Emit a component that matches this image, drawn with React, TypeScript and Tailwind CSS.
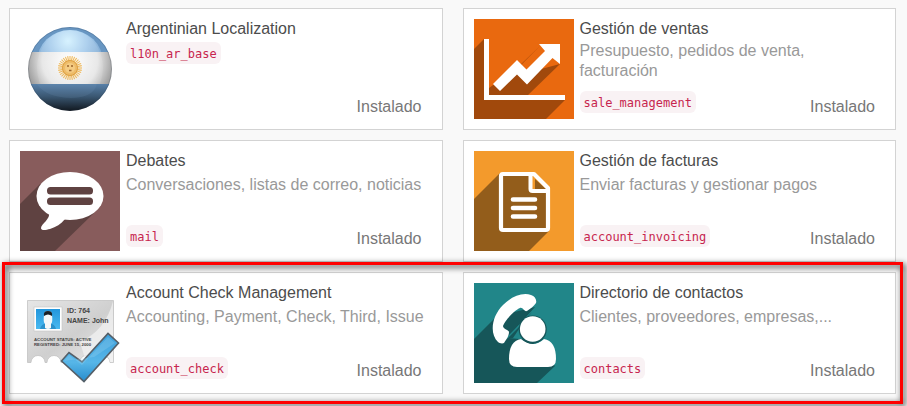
import type { ReactNode } from "react";

interface Module {
  title: string;
  summary?: string;
  twoLines?: boolean;
  code: string;
  icon: ReactNode;
}

const ICON = "h-[100px] w-[100px] shrink-0";

function ArgentinaIcon() {
  const rays = Array.from({ length: 32 }, (_, i) => i * 11.25);
  return (
    <svg viewBox="0 0 100 100" className={ICON} aria-hidden="true">
      <defs>
        <clipPath id="ball">
          <circle cx="50" cy="50" r="42" />
        </clipPath>
        <radialGradient id="sky" gradientUnits="userSpaceOnUse" cx="48" cy="22" r="38">
          <stop offset="0" stopColor="#d3f1ff" />
          <stop offset="0.5" stopColor="#a5cbec" />
          <stop offset="1" stopColor="#7ba6cf" />
        </radialGradient>
        <radialGradient id="band" gradientUnits="userSpaceOnUse" cx="50" cy="42" r="46">
          <stop offset="0" stopColor="#ffffff" />
          <stop offset="0.6" stopColor="#e6e6e6" />
          <stop offset="1" stopColor="#959595" />
        </radialGradient>
        <linearGradient id="deep" x1="0" y1="0" x2="0" y2="1">
          <stop offset="0" stopColor="#5880a8" />
          <stop offset="0.35" stopColor="#3b5873" />
          <stop offset="0.78" stopColor="#10161d" />
        </linearGradient>
      </defs>
      <g clipPath="url(#ball)">
        <rect width="100" height="34" fill="#6896c2" />
        <ellipse cx="50" cy="43" rx="33" ry="32" fill="url(#sky)" />
        <rect y="33" width="100" height="32" fill="url(#band)" />
        <ellipse cx="50" cy="49" rx="33" ry="38" fill="#ffffff" opacity="0.1" />
        <rect y="65" width="100" height="35" fill="url(#deep)" />
        <path d="M17 65h60c-2 9-12 14-26 14S22 74 17 65z" fill="#7da2c6" opacity="0.14" />
      </g>
      <circle cx="50" cy="50" r="41.5" fill="none" stroke="#243447" strokeOpacity="0.2" />
      <g stroke="#efb95b" strokeWidth="1.1">
        {rays.map((a) => (
          <line key={a} x1="50" y1="37" x2="50" y2="42" transform={`rotate(${a} 50 49)`} />
        ))}
      </g>
      <circle cx="50" cy="49" r="7.5" fill="#eebc69" stroke="#dda044" />
      <circle cx="50" cy="49" r="5" fill="#f5cc83" />
      <path d="M47 47h2M51 47h2M49 51.500h2.500" stroke="#9c642c" strokeWidth="1.300" />
    </svg>
  );
}

function SalesIcon() {
  return (
    <svg viewBox="0 0 100 100" className={ICON} aria-hidden="true">
      <rect width="100" height="100" fill="#e9690f" />
      <path d="M10 20L0 30v70h72l19-19H15V20z" fill="#a1490c" />
      <path d="M15 20h71v56H15z" fill="#e9690f" />
      <path d="M66 27L47 46l5 8L86 45 54 76H15v-7l28-20z" fill="#a1490c" />
      <path d="M10 20h5v56h76v5H10z" fill="#fff" />
      <path d="M19 65l24-24 9.500 9.500L71 32l-6-7h21v20l-7.500-6L53 65.500l-10-10L26 72z" fill="#fff" />
    </svg>
  );
}

function ChatIcon() {
  return (
    <svg viewBox="0 0 100 100" className={ICON} aria-hidden="true">
      <rect width="100" height="100" fill="#885c5c" />
      <path d="M20 33L0 53v47h35l39-38z" fill="#5f4241" />
      <ellipse cx="50" cy="45" rx="33.500" ry="24" fill="#fff" />
      <path d="M29 61c2 7-8 12-8 16 0 3 5 2 9 1 6-2 11-5 15-10z" fill="#fff" />
      <rect x="27" y="36" width="46" height="7.500" rx="3.500" fill="#5f4241" />
      <rect x="27" y="46.500" width="46" height="7.500" rx="3.500" fill="#5f4241" />
    </svg>
  );
}

function InvoiceIcon() {
  return (
    <svg viewBox="0 0 100 100" className={ICON} aria-hidden="true">
      <rect width="100" height="100" fill="#f39a2c" />
      <path d="M26 22L0 48v52h55l20-20V39H57V24z" fill="#935d1b" />
      <path d="M61 28l11 10H61z" fill="#935d1b" />
      <path
        d="M29 23h31l14 14v40q0 2-2 2H29q-2 0-2-2V25q0-2 2-2z"
        fill="none"
        stroke="#fff"
        strokeWidth="4.200"
        strokeLinejoin="round"
      />
      <path d="M56.500 24v14q0 2 2 2H74" fill="none" stroke="#fff" strokeWidth="4" />
      <path
        d="M39 48.500h22M39 57h22M39 65.500h22"
        stroke="#fff"
        strokeWidth="4.600"
        strokeLinecap="round"
      />
    </svg>
  );
}

function CheckIcon() {
  return (
    <svg viewBox="0 0 100 100" className={ICON} aria-hidden="true">
      <defs>
        <linearGradient id="paper" x1="0" y1="0" x2="1" y2="1">
          <stop offset="0" stopColor="#e6e6e6" />
          <stop offset="0.55" stopColor="#cfcfcf" />
          <stop offset="1" stopColor="#ededed" />
        </linearGradient>
        <linearGradient id="photo" x1="0" y1="0" x2="0" y2="1">
          <stop offset="0" stopColor="#2396dc" />
          <stop offset="1" stopColor="#49b9f0" />
        </linearGradient>
        <linearGradient id="tick" x1="0" y1="0" x2="0" y2="1">
          <stop offset="0" stopColor="#3d9fda" />
          <stop offset="0.6" stopColor="#57b6e8" />
          <stop offset="1" stopColor="#278ccc" />
        </linearGradient>
      </defs>
      <path
        d="M7.500 17.500h86v62H90a7 7 0 0 0-14 0h-2.500a7 7 0 0 0-14 0H57a7 7 0 0 0-14 0h-2a7 7 0 0 0-14 0h-2a7 7 0 0 0-14 0H7.500z"
        fill="url(#paper)"
        stroke="#bdbdbd"
        strokeWidth="0.700"
      />
      <path d="M93 18v61h-3a7 7 0 0 0-14 0H66l-6-20Q86 47 93 18z" fill="#f6f6f6" opacity="0.65" />
      <rect x="14" y="24" width="28" height="24" fill="#fff" stroke="#c4c4c4" strokeWidth="0.600" />
      <rect x="16" y="26" width="24" height="20" fill="url(#photo)" />
      <path d="M20 46q1-5 7-6h2q6 1 7 6z" fill="#1674b0" opacity="0.55" />
      <path d="M24 32q0-4 4-4t4 4q1 7-1 9v4q-3 2-6 0v-4q-2-2-1-9z" fill="#f4f7f8" />
      <path d="M24 33q-1-5 4-5t4 5q-4-3-8 0z" fill="#192027" />
      <g className="font-['Liberation_Sans',Arial,sans-serif] font-bold" fill="#444">
        <text x="47" y="30" fontSize="7">ID: 764</text>
        <text x="47" y="40" fontSize="7">NAME: John</text>
        <text x="14" y="58" fontSize="4.3">ACCOUNT STATUS: ACTIVE</text>
        <text x="14" y="63" fontSize="4.3">REGISTRED: JUNE 15, 2000</text>
      </g>
      <path
        d="M41.500 78l7.500-8.500L62 79l26-28.500L98.500 60 64 98.500z"
        fill="url(#tick)"
        stroke="#555f68"
        strokeWidth="1.600"
      />
      <path d="M44 78l5-6 13 10 26-28 7 6-21 14z" fill="#a9dcf5" opacity="0.25" />
    </svg>
  );
}

function ContactsIcon() {
  return (
    <svg viewBox="0 0 100 100" className={ICON} aria-hidden="true">
      <rect width="100" height="100" fill="#218689" />
      <path d="M23 33L0 56v44h63l18-17-24-26-24-2 28-31z" fill="#165659" />
      <path d="M58 29L32 56l7-1 8-12z" fill="#165659" />
      <path d="M46 42L33 55" stroke="#218689" strokeWidth="1.500" />
      <path
        d="M24 59c-9-9-6-26 5-37 8-8 19-13 28-10 4 1 6 5 5 8-2 3-6 6-9 8-3 1-4-4-7-3-5 2-15 12-17 18 0 3 6 4 6 6 0 4-3 8-5 11-2 1-5 0-6-1z"
        fill="#fff"
      />
      <path
        d="M47 56q-12 2-12 20 0 8 8 8h31q8 0 8-8 0-18-12-20-11 10-23 0z"
        fill="#fff"
      />
      <circle cx="58.700" cy="46.500" r="14" fill="#165659" />
      <circle cx="58.700" cy="46" r="12.800" fill="#fff" />
    </svg>
  );
}

const rows: Module[][] = [
  [
    { title: "Argentinian Localization", code: "l10n_ar_base", icon: <ArgentinaIcon /> },
    {
      title: "Gestión de ventas",
      summary: "Presupuesto, pedidos de venta, facturación",
      twoLines: true,
      code: "sale_management",
      icon: <SalesIcon />,
    },
  ],
  [
    {
      title: "Debates",
      summary: "Conversaciones, listas de correo, noticias",
      code: "mail",
      icon: <ChatIcon />,
    },
    {
      title: "Gestión de facturas",
      summary: "Enviar facturas y gestionar pagos",
      code: "account_invoicing",
      icon: <InvoiceIcon />,
    },
  ],
  [
    {
      title: "Account Check Management",
      summary: "Accounting, Payment, Check, Third, Issue",
      code: "account_check",
      icon: <CheckIcon />,
    },
    {
      title: "Directorio de contactos",
      summary: "Clientes, proveedores, empresas,...",
      code: "contacts",
      icon: <ContactsIcon />,
    },
  ],
];

function ModuleCard({ title, summary, twoLines, code, icon }: Module) {
  return (
    <article className="flex gap-1.5 border border-[#d3d3d3] bg-white p-2.5">
      {icon}
      <div className="flex min-w-0 flex-1 flex-col">
        <h4 className="text-base leading-5 text-[#4c4c4c]">{title}</h4>
        {summary && (
          <p
            className={`min-h-10 max-w-[310px] text-base leading-5 text-[#999] ${twoLines ? "mt-0.5" : "mt-1"}`}
          >
            {summary}
          </p>
        )}
        <div className="flex flex-1 justify-between pr-2.5">
          <code
            className={`self-start rounded-md bg-[#f9f2f4] px-1 pt-0.5 font-['DejaVu_Sans_Mono',monospace] text-xs leading-5 text-[#c7254e] ${summary ? "mt-2.5" : "mt-[3px]"}`}
          >
            {code}
          </code>
          <span className="self-end pb-0.5 text-base leading-5 text-[#777]">Instalado</span>
        </div>
      </div>
    </article>
  );
}

export default function App() {
  return (
    <main className="flex min-h-screen flex-col gap-2.5 overflow-hidden bg-[#f9f9f9] pt-2 pr-[11px] pb-3 pl-[9px] font-['Liberation_Sans',Arial,sans-serif]">
      {rows.map((row, i) => (
        <section key={i} className="relative grid grid-cols-2 gap-5">
          {row.map((m) => (
            <ModuleCard key={m.code} {...m} />
          ))}
          {i === 2 && (
            <div className="pointer-events-none absolute -inset-x-[7px] -inset-y-2.5 border-3 border-[#fe0000] drop-shadow-[2px_2px_3px_rgba(0,0,0,0.9)]" />
          )}
        </section>
      ))}
    </main>
  );
}
